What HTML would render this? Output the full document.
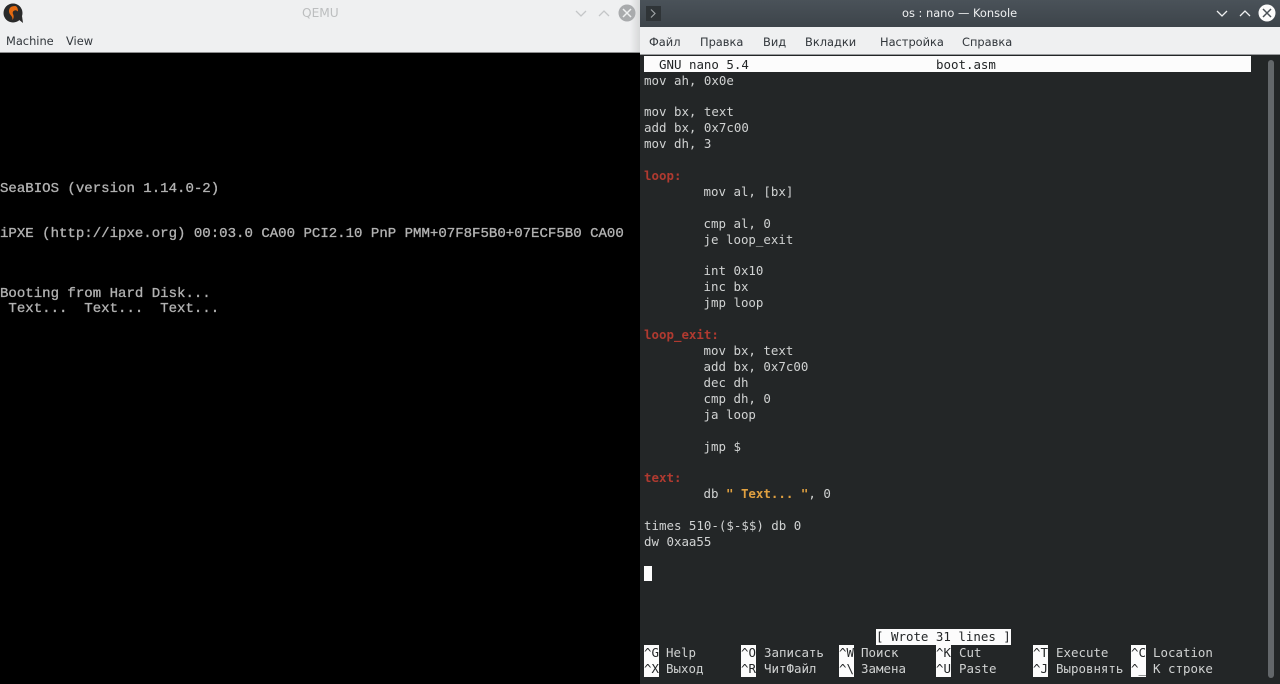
<!DOCTYPE html>
<html><head><meta charset="utf-8">
<style>
html,body{margin:0;padding:0;width:1280px;height:684px;overflow:hidden;background:#000}
div{position:absolute;white-space:pre}
#mL{left:0;top:27px;width:640px;height:25px;background:#eff0f1}
#tL{left:0;top:0;width:640px;height:27px;background:#eff0f1}
#tR{left:640px;top:0;width:640px;height:27px;background:linear-gradient(#4a5259,#3d444a)}
#mR{left:640px;top:27px;width:640px;height:28px;background:#eff0f1;border-bottom:1px solid #9a9c9e;box-sizing:border-box}
#term{left:640px;top:55px;width:640px;height:629px;background:#232627}
.m{font:11.4px/16px "DejaVu Sans",sans-serif;color:#31363b}
.t{font:12.45px/16px "DejaVu Sans Mono",monospace;color:#d0d2d2}
.b{font-weight:bold}
.r{color:#b03a30}
.y{color:#e0a040}
.inv{background:#fcfcfc;color:#232627}
.v{font:14.05px/16px "Liberation Mono",monospace;color:#b4b4b4;left:0;-webkit-text-stroke:.35px #aaa}
</style></head><body>
<div id="tL"></div>
<div id="mL"></div>
<div style="left:0;top:52px;width:640px;height:1px;background:#8c8d8e"></div>
<div id="tR"></div>
<div id="mR"></div>
<div id="term"></div>
<div style="left:630px;top:0;width:10px;height:52px;background:linear-gradient(90deg,rgba(0,0,0,0),rgba(0,0,0,.1))"></div>

<svg style="position:absolute;left:3px;top:3px" width="22" height="21" viewBox="0 0 22 21">
<circle cx="10" cy="10" r="9.5" fill="#2a2a2a"/><path d="M15 16l5 4-1-7z" fill="#2a2a2a"/>
<path d="M12 3c-4 0-6 2-6 5 0 3 2 4 3 6 1 2 0 3 0 3 2-1 2-4 1-6-.7-1.500 0-3 1.500-3.500 1.200-.5 2.500 0 3.500 1 0-3-1-5.500-3-5.500z" fill="#e56a10"/>
</svg>
<div style="left:302px;top:5px;font:12.2px/16px 'DejaVu Sans',sans-serif;color:#bcbebf">QEMU</div>
<svg style="position:absolute;left:572px;top:4px" width="68" height="20" viewBox="0 0 68 20">
<path d="M4 7l5 5 5-5" fill="none" stroke="#c4c6c8" stroke-width="1.300"/>
<path d="M27 12l5-5 5 5" fill="none" stroke="#c4c6c8" stroke-width="1.300"/>
<circle cx="55" cy="9" r="8.500" fill="#a9abad"/>
<path d="M51 5l8 8M59 5l-8 8" stroke="#eff0f1" stroke-width="1.500"/>
</svg>
<div class="m" style="left:6px;top:33px">Machine</div>
<div class="m" style="left:66px;top:33px">View</div>

<div class="v" style="top:181px">SeaBIOS (version 1.14.0-2)</div>
<div class="v" style="top:226px">iPXE (http://ipxe.org) 00:03.0 CA00 PCI2.10 PnP PMM+07F8F5B0+07ECF5B0 CA00</div>
<div class="v" style="top:286px">Booting from Hard Disk...</div>
<div class="v" style="top:301px"> Text...  Text...  Text...</div>

<div style="left:646px;top:6px;width:15px;height:15px;background:#2f3437"></div>
<svg style="position:absolute;left:646px;top:6px" width="15" height="15"><path d="M5 3.500l4 4-4 4" fill="none" stroke="#9fa3a6" stroke-width="1.200"/></svg>
<div style="left:902px;top:5px;font:11.4px/16px 'DejaVu Sans',sans-serif;color:#eff0f1">os : nano — Konsole</div>
<svg style="position:absolute;left:1211px;top:4px" width="69" height="20" viewBox="0 0 69 20">
<path d="M6 7l5 5 5-5" fill="none" stroke="#eff0f1" stroke-width="1.300"/>
<path d="M29 12l5-5 5 5" fill="none" stroke="#eff0f1" stroke-width="1.300"/>
<circle cx="56" cy="9" r="8.500" fill="#fcfcfc"/>
<path d="M52 5l8 8M60 5l-8 8" stroke="#4a5157" stroke-width="1.500"/>
</svg>
<div class="m" style="left:649px;top:34px">Файл</div>
<div class="m" style="left:700px;top:34px">Правка</div>
<div class="m" style="left:763px;top:34px">Вид</div>
<div class="m" style="left:805px;top:34px">Вкладки</div>
<div class="m" style="left:880px;top:34px">Настройка</div>
<div class="m" style="left:962px;top:34px">Справка</div>

<div style="left:644px;top:56px;width:607px;height:16px;background:#fcfcfc"></div>
<div class="t" style="left:659px;top:57px;color:#232627">GNU nano 5.4</div>
<div class="t" style="left:936px;top:57px;color:#232627">boot.asm</div>

<div class="t" style="left:644px;top:73px">mov ah, 0x0e</div>
<div class="t" style="left:644px;top:104px">mov bx, text</div>
<div class="t" style="left:644px;top:120px">add bx, 0x7c00</div>
<div class="t" style="left:644px;top:136px">mov dh, 3</div>
<div class="t b r" style="left:644px;top:168px">loop:</div>
<div class="t" style="left:703.5px;top:184px">mov al, [bx]</div>
<div class="t" style="left:703.5px;top:216px">cmp al, 0</div>
<div class="t" style="left:703.5px;top:232px">je loop_exit</div>
<div class="t" style="left:703.5px;top:263px">int 0x10</div>
<div class="t" style="left:703.5px;top:279px">inc bx</div>
<div class="t" style="left:703.5px;top:295px">jmp loop</div>
<div class="t b r" style="left:644px;top:327px">loop_exit:</div>
<div class="t" style="left:703.5px;top:343px">mov bx, text</div>
<div class="t" style="left:703.5px;top:359px">add bx, 0x7c00</div>
<div class="t" style="left:703.5px;top:375px">dec dh</div>
<div class="t" style="left:703.5px;top:391px">cmp dh, 0</div>
<div class="t" style="left:703.5px;top:407px">ja loop</div>
<div class="t" style="left:703.5px;top:439px">jmp $</div>
<div class="t b r" style="left:644px;top:470px">text:</div>
<div class="t" style="left:703.5px;top:486px">db <span class="b y">" Text... "</span>, 0</div>
<div class="t" style="left:644px;top:518px">times 510-($-$$) db 0</div>
<div class="t" style="left:644px;top:534px">dw 0xaa55</div>
<div style="left:644px;top:566px;width:7.500px;height:15px;background:#fcfcfc"></div>

<div class="t inv" style="left:876px;top:629px">[ Wrote 31 lines ]</div>

<div class="t inv" style="left:644px;top:645px">^G</div><div class="t" style="left:666px;top:645px">Help</div>
<div class="t inv" style="left:644px;top:661px">^X</div><div class="t" style="left:666px;top:661px">Выход</div>
<div class="t inv" style="left:741px;top:645px">^O</div><div class="t" style="left:764px;top:645px">Записать</div>
<div class="t inv" style="left:741px;top:661px">^R</div><div class="t" style="left:764px;top:661px">ЧитФайл</div>
<div class="t inv" style="left:839px;top:645px">^W</div><div class="t" style="left:861px;top:645px">Поиск</div>
<div class="t inv" style="left:839px;top:661px">^\</div><div class="t" style="left:861px;top:661px">Замена</div>
<div class="t inv" style="left:936px;top:645px">^K</div><div class="t" style="left:959px;top:645px">Cut</div>
<div class="t inv" style="left:936px;top:661px">^U</div><div class="t" style="left:959px;top:661px">Paste</div>
<div class="t inv" style="left:1033px;top:645px">^T</div><div class="t" style="left:1056px;top:645px">Execute</div>
<div class="t inv" style="left:1033px;top:661px">^J</div><div class="t" style="left:1056px;top:661px">Выровнять</div>
<div class="t inv" style="left:1131px;top:645px">^C</div><div class="t" style="left:1153px;top:645px">Location</div>
<div class="t inv" style="left:1131px;top:661px">^_</div><div class="t" style="left:1153px;top:661px">К строке</div>

<div style="left:1268px;top:60px;width:6px;height:618px;background:#63676a;border-radius:3px"></div>
</body></html>
